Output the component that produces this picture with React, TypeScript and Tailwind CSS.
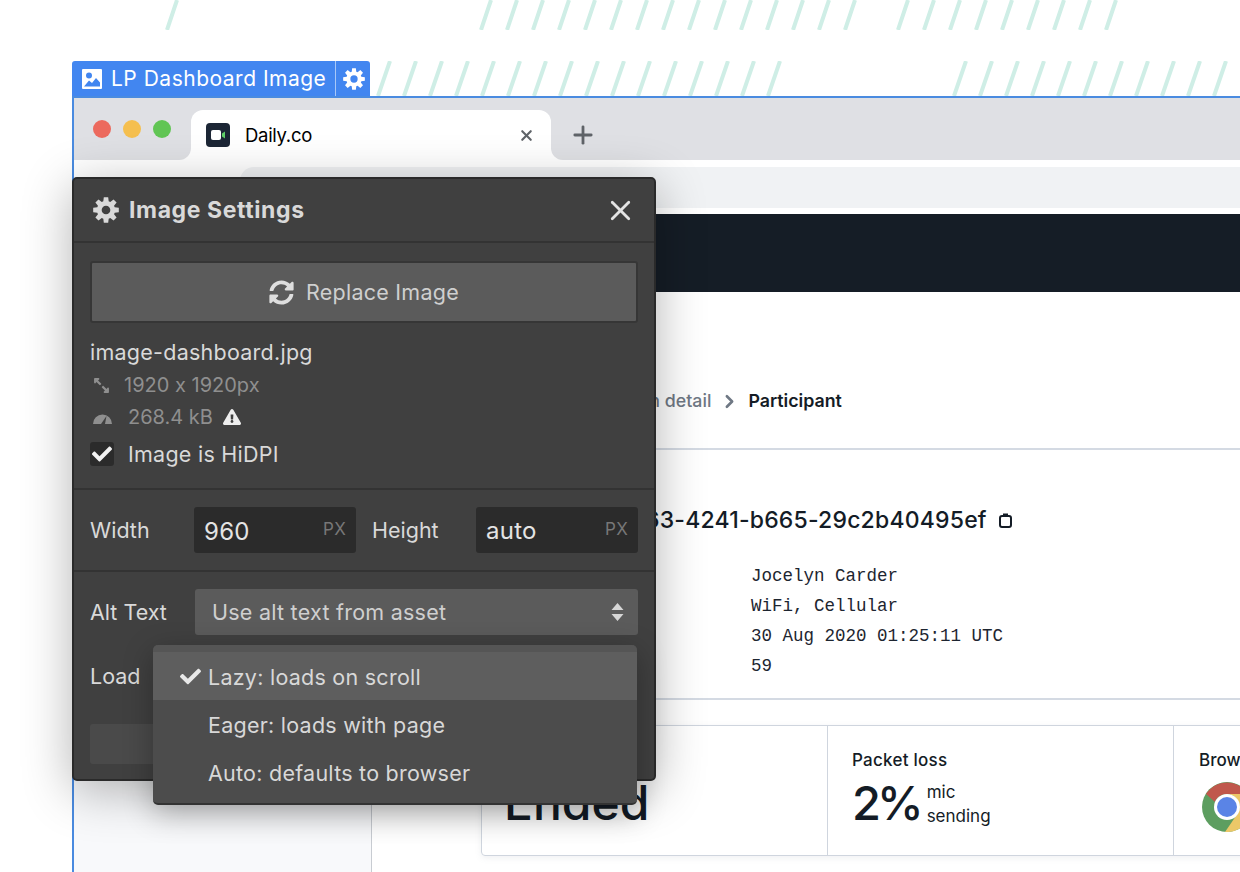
import { X, Plus, ChevronRight } from "lucide-react";
import { FaSyncAlt, FaExclamationTriangle, FaCheck, FaExpandAlt } from "react-icons/fa";

const topStripes = [167, ...range(481, 15), ...range(898, 9)];
const labelStripes = [...range(378 - 370, 16), ...range(954 - 370, 11)];

function range(start: number, count: number) {
  return Array.from({ length: count }, (_, i) => start + i * 26);
}

function Stripes({ xs, height, lean, width }: { xs: number[]; height: number; lean: number; width: number }) {
  return (
    <svg width={width} height={height} className="block shrink-0">
      {xs.map((x) => (
        <line key={x} x1={x} y1={height} x2={x + lean} y2={0} stroke="#cfeee6" strokeWidth="4" />
      ))}
    </svg>
  );
}

// 8 pointed teeth, same gear in the tag and the dialog title
function gearPath() {
  const pts: string[] = [];
  for (let i = 0; i < 8; i++) {
    const a = (i * Math.PI) / 4;
    const at = (r: number, off: number) => {
      const t = a + off;
      return `${(12 + r * Math.sin(t)).toFixed(2)} ${(12 - r * Math.cos(t)).toFixed(2)}`;
    };
    pts.push(at(8.4, -0.3), at(12, -0.17), at(12, 0.17), at(8.4, 0.3));
  }
  return `M${pts.join(" L")} Z M12 8 A4 4 0 1 0 12 16 A4 4 0 1 0 12 8 Z`;
}

function Gear({ size, className }: { size: number; className?: string }) {
  return (
    <svg width={size} height={size} viewBox="0 0 24 24" className={className}>
      <path d={gearPath()} fill="currentColor" fillRule="evenodd" />
    </svg>
  );
}

function ImageGlyph() {
  return (
    <svg width="20" height="20" viewBox="0 0 20 20">
      <rect width="20" height="20" rx="1" fill="#fff" />
      <circle cx="7" cy="6.5" r="3" fill="#4286f0" />
      <path d="M2 17.5 L7 11.5 L10 14 L14 9 L18 13.5 V17.5 Z" fill="#4286f0" />
    </svg>
  );
}

function DailyGlyph() {
  return (
    <svg width="24" height="24" viewBox="0 0 24 24">
      <rect width="24" height="24" rx="4" fill="#1c2635" />
      <rect x="5" y="7" width="10" height="10" rx="2" fill="#fff" />
      <path d="M16 10.5 L19 8.5 V15.5 L16 13.5 Z" fill="#5fd068" />
    </svg>
  );
}

function GaugeGlyph() {
  return (
    <svg width="19" height="13" viewBox="0 0 19 13">
      <path d="M0 13 A9.5 9.5 0 0 1 19 13 H12 L13.5 5 L8 13 Z" fill="#8f8f8f" />
    </svg>
  );
}

function SortGlyph() {
  return (
    <svg width="13" height="18" viewBox="0 0 13 18">
      <path d="M6.5 0 L12.5 7 H0.5 Z M6.5 18 L0.5 11 H12.5 Z" fill="#d6d6d6" />
    </svg>
  );
}

function ClipboardGlyph() {
  return (
    <svg width="13" height="15" viewBox="0 0 13 15" fill="none" stroke="#141c26" strokeWidth="2">
      <rect x="1" y="3" width="11" height="11" rx="2" />
      <path d="M4 1.5 H9" />
    </svg>
  );
}

function ChromeGlyph() {
  return (
    <svg width="50" height="50" viewBox="0 0 50 50" className="block">
      <circle cx="25" cy="25" r="25" fill="#5d9e60" />
      <path d="M4 12 A25 25 0 0 1 46 12 H25 A13 13 0 0 0 13 20 Z" fill="#c0584c" />
      <path d="M46 12 A25 25 0 0 1 23 50 L36 31 A13 13 0 0 0 25 12 Z" fill="#ecc868" />
      <circle cx="25" cy="25" r="13" fill="#fff" />
      <circle cx="25" cy="25" r="10" fill="#5a84e6" />
    </svg>
  );
}

function DropdownItem({ label, active }: { label: string; active?: boolean }) {
  return (
    <div className={`flex items-center h-[48px] text-[21.5px] text-[#d8d8d8] ${active ? "bg-[#5e5e5e]" : ""}`}>
      <span className="w-[55px] flex justify-end pr-[7px]">
        {active && <FaCheck className="text-[21px] text-[#e8e8e8]" />}
      </span>
      <span className="pt-[2px]">{label}</span>
    </div>
  );
}

function SettingsDialog() {
  return (
    <div className="absolute left-[72px] top-[177px] w-[584px] h-[604px] rounded-[5px] border-2 border-[#2a2a2a] bg-[#404040] text-[#d9d9d9] text-[21.5px] tracking-[0.25px] shadow-[0_10px_50px_rgba(0,0,0,0.3)]">
      {/* header */}
      <div className="flex items-center h-[64px] pl-[19px] pr-[17px] border-b-2 border-[#333]">
        <Gear size={26} className="text-[#d9d9d9] mr-[10px]" />
        <span className="text-[23px] font-bold tracking-[0.6px]">Image Settings</span>
        <X className="ml-auto text-[#e4e4e4]" size={33} strokeWidth={2} />
      </div>

      {/* file */}
      <div className="h-[247px] px-[16px] pt-[18px] border-b-2 border-[#333]">
        <div className="flex items-center justify-center gap-[12px] h-[62px] rounded-[3px] border-2 border-[#363636] bg-[#5b5b5b] text-[#cfcfcf]">
          <FaSyncAlt className="text-[25px] text-[#dedede]" />
          <span>Replace Image</span>
        </div>
        <div className="mt-[14px] h-[30px] leading-[30px]">image-dashboard.jpg</div>
        <div className="flex items-center h-[32px] mt-[2px] text-[#8f8f8f] text-[20px] tracking-normal [font-feature-settings:'calt'_0]">
          <span className="w-[34px] pl-[3px]">
            <FaExpandAlt className="text-[17px] -scale-x-100" />
          </span>
          <span>1920 x 1920px</span>
        </div>
        <div className="flex items-center h-[32px] text-[#8f8f8f] text-[20px] tracking-normal">
          <span className="w-[38px] pl-[3px]"><GaugeGlyph /></span>
          <span>268.4 kB</span>
          <FaExclamationTriangle className="text-[18px] text-[#eeeeee] ml-[10px]" />
        </div>
        <div className="flex items-center h-[40px] mt-[1px]">
          <span className="flex items-center justify-center w-[24px] h-[24px] mr-[14px] rounded-[3px] bg-[#2b2b2b]">
            <FaCheck className="text-[20px] text-[#f2f2f2]" />
          </span>
          <span>Image is HiDPI</span>
        </div>
      </div>

      {/* size */}
      <div className="flex items-center h-[82px] px-[16px] border-b-2 border-[#333]">
        <span className="w-[104px] tracking-normal">Width</span>
        <div className="flex items-center justify-between w-[162px] h-[46px] px-[10px] rounded-[3px] bg-[#2b2b2b] text-[#e4e4e4] text-[24px]">
          <span className="pt-[3px]">960</span>
          <span className="text-[17px] text-[#777]">PX</span>
        </div>
        <span className="w-[120px] pl-[16px] tracking-normal">Height</span>
        <div className="flex items-center justify-between w-[162px] h-[46px] px-[10px] rounded-[3px] bg-[#2b2b2b] text-[#e4e4e4] text-[24px]">
          <span className="pt-[2px]">auto</span>
          <span className="text-[17px] text-[#777]">PX</span>
        </div>
      </div>

      {/* alt + load */}
      <div className="px-[16px] pt-[17px]">
        <div className="flex items-center">
          <span className="w-[105px] tracking-normal">Alt Text</span>
          <div className="flex items-center justify-between w-[443px] h-[46px] pl-[17px] pr-[14px] rounded-[3px] bg-[#5b5b5b] text-[#cfcfcf]">
            <span>Use alt text from asset</span>
            <SortGlyph />
          </div>
        </div>
        <div className="flex items-center h-[30px] mt-[26px] tracking-normal">Load</div>
        <div className="h-[40px] w-[200px] mt-[33px] rounded-[3px] bg-[#4a4a4a]" />
      </div>

      {/* open dropdown */}
      <div className="absolute left-[79px] top-[466px] w-[484px] h-[160px] rounded-[5px] border-b-2 border-[#333] bg-[#4c4c4c] shadow-[0_8px_30px_rgba(0,0,0,0.3)]">
        <div className="h-[7px] rounded-t-[5px] bg-[#555]" />
        <DropdownItem label="Lazy: loads on scroll" active />
        <DropdownItem label="Eager: loads with page" />
        <DropdownItem label="Auto: defaults to browser" />
      </div>
    </div>
  );
}

function BrowserChrome() {
  return (
    <>
      <div className="flex h-[62px] bg-[linear-gradient(#dfe0e4_50%,#fff_50%)]">
        <div className="flex items-start gap-[12px] w-[117px] pl-[19px] pt-[22px] bg-[#dfe0e4] rounded-br-[12px]">
          <span className="w-[18px] h-[18px] rounded-full bg-[#ec6a5e]" />
          <span className="w-[18px] h-[18px] rounded-full bg-[#f5bf4f]" />
          <span className="w-[18px] h-[18px] rounded-full bg-[#61c554]" />
        </div>
        <div className="flex items-center w-[360px] mt-[12px] pl-[15px] pr-[16px] bg-white rounded-t-[12px] text-[18.5px] text-black">
          <DailyGlyph />
          <span className="ml-[15px] pt-[2px] tracking-[-0.3px]">Daily.co</span>
          <X className="ml-auto text-[#5f6368]" size={17} strokeWidth={3} />
        </div>
        <div className="flex-1 pl-[18px] pt-[23px] bg-[#dfe0e4] rounded-bl-[12px]">
          <Plus className="text-[#5f6368]" size={28} strokeWidth={2.4} />
        </div>
      </div>
      <div className="pl-[166px] pt-[7px] pb-[6px] bg-white">
        <div className="h-[41px] rounded-l-[14px] bg-[#f0f2f4]" />
      </div>
      <div className="h-[78px] bg-[#151d26]" />
    </>
  );
}

function StatsCard() {
  return (
    <div className="flex w-[1038px] h-[131px] mt-[25px] rounded-[4px] border border-[#cfd5de] text-[#141c26] shadow-[0_2px_6px_rgba(120,130,150,0.12)]">
      <div className="w-[346px] shrink-0 pl-[22px] pt-[22px] border-r border-[#cfd5de]">
        <div className="h-[26px] pl-[2px] text-[17px] font-medium">Status</div>
        <div className="-mt-[1px] text-[48px] leading-[60px] font-medium">Ended</div>
      </div>
      <div className="w-[346px] shrink-0 pl-[24px] pt-[22px] border-r border-[#cfd5de]">
        <div className="h-[26px] text-[17px] font-medium tracking-[0.25px]">Packet loss</div>
        <div className="flex items-center -mt-[1px]">
          <span className="text-[47px] leading-[60px] font-medium tracking-[-4px]">2%</span>
          <div className="ml-[7px] mt-[2px] text-[17px] leading-[24px]">
            <div>mic</div>
            <div>sending</div>
          </div>
        </div>
      </div>
      <div className="w-[346px] shrink-0 pl-[25px] pt-[22px]">
        <div className="h-[26px] text-[17px] font-medium">Browser</div>
        <div className="mt-[8px] ml-[3px]"><ChromeGlyph /></div>
      </div>
    </div>
  );
}

function MainContent() {
  return (
    <div className="flex-1 min-w-0 pl-[109px]">
      <div className="h-[158px] -ml-[109px] pl-[221px] pt-[97px] border-b-2 border-[#d4dae3] flex items-start">
        <div className="flex items-center h-[24px] text-[17.8px] font-medium">
          <span className="text-[#6f7884]">Session detail</span>
          <ChevronRight className="mx-[8px] text-[#6f7884]" size={21} strokeWidth={3} />
          <span className="font-semibold text-[#141c26]">Participant</span>
        </div>
      </div>
      <div className="flex items-center h-[30px] mt-[55px] pl-[164px] text-[23px] font-medium text-[#141c26]">
        <span className="whitespace-nowrap tracking-[0.2px]">63-4241-b665-29c2b40495ef</span>
        <span className="ml-[12px]"><ClipboardGlyph /></span>
      </div>
      <div className="mt-[26px] pl-[270px] [font-family:'Liberation_Mono',monospace] text-[17.5px] leading-[30px] text-[#1d2530]">
        <div>Jocelyn Carder</div>
        <div>WiFi, Cellular</div>
        <div>30 Aug 2020 01:25:11 UTC</div>
        <div>59</div>
      </div>
      <div className="-ml-[109px] mt-[17px] border-b-2 border-[#d4dae3]" />
      <StatsCard />
    </div>
  );
}

export default function App() {
  return (
    <div className="relative w-[1240px] h-[872px] overflow-hidden bg-white [font-family:Inter,sans-serif]">
      <div className="h-[61px]">
        <Stripes xs={topStripes} height={30} lean={10} width={1240} />
      </div>
      <div className="flex h-[35px] pl-[72px]">
        <div className="flex items-center w-[298px] shrink-0 rounded-t-[3px] bg-[#4286f0] text-white text-[21px] tracking-[0.5px] pl-[10px]">
          <ImageGlyph />
          <span className="ml-[9px] whitespace-nowrap">LP Dashboard Image</span>
          <span className="ml-[9px] h-full w-[1px] bg-[#a8c8f8]" />
          <Gear size={22} className="ml-[7px]" />
        </div>
        <Stripes xs={labelStripes} height={35} lean={12} width={870} />
      </div>
      <div className="ml-[72px] h-[776px] flex flex-col border-t-2 border-l-2 border-[#4a8be0]">
        <BrowserChrome />
        <div className="flex flex-1 min-w-0 overflow-hidden">
          <div className="w-[298px] shrink-0 bg-[#f8f9fb] border-r border-[#c8ccd2]" />
          <MainContent />
        </div>
      </div>
      <SettingsDialog />
    </div>
  );
}
